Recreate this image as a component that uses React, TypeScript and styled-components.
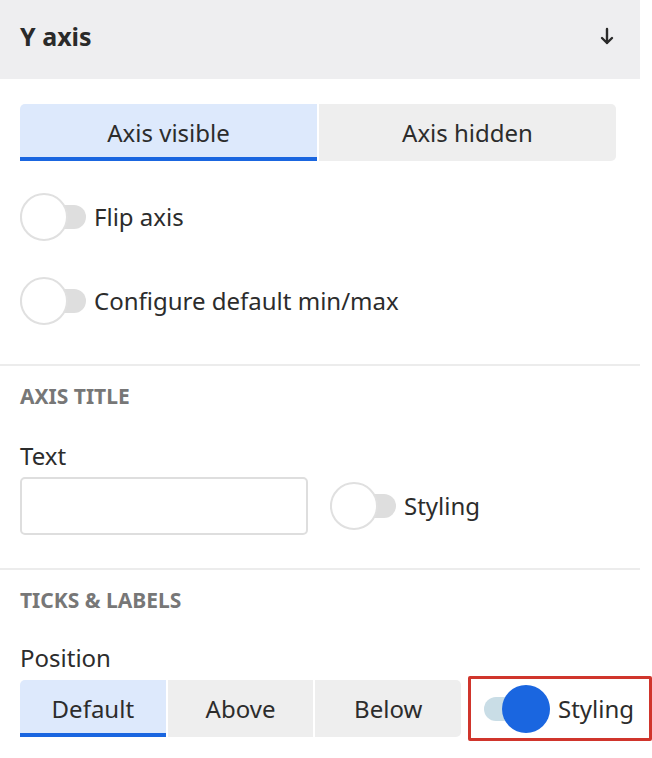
import styled, { createGlobalStyle } from 'styled-components';

const GlobalStyle = createGlobalStyle`
    body {
        margin: 0;
        background: #ffffff;
        font-family: "Noto Sans", "Open Sans", sans-serif;
        color: #2c2c2c;
    }
`;

const Panel = styled.div`
    width: 640px;
`;

const Header = styled.div`
    height: 79px;
    background-color: #eeeef0;
    display: flex;
    align-items: center;
    justify-content: space-between;
    padding: 0 26px 7px 20px;
    box-sizing: border-box;
`;

const Title = styled.h1`
    margin: 0;
    font-size: 25px;
    font-weight: 700;
    color: #2a2a2a;
`;

const Section = styled.div<{ $top: number; $bottom: number }>`
    padding: ${p => p.$top}px 24px ${p => p.$bottom}px 20px;
    border-bottom: 2px solid #ececec;

    &:last-child {
        border-bottom: none;
    }
`;

const Heading = styled.div`
    font-size: 21px;
    font-weight: 700;
    color: #777777;
    text-transform: uppercase;
    line-height: 24px;
`;

const Label = styled.div`
    font-size: 24px;
    line-height: 28px;
`;

const Segmented = styled.div<{ $width: number }>`
    display: flex;
    gap: 2px;
    width: ${p => p.$width}px;
    flex-shrink: 0;
`;

const Segment = styled.div<{ $active?: boolean }>`
    flex: 1;
    height: 57px;
    box-sizing: border-box;
    display: flex;
    align-items: center;
    justify-content: center;
    font-size: 24px;
    background-color: ${p => (p.$active ? '#dde9fc' : '#eeeeee')};
    border-bottom: 4px solid ${p => (p.$active ? '#1a66e0' : 'transparent')};
    padding-top: 4px;

    &:first-child {
        border-top-left-radius: 5px;
    }

    &:last-child {
        border-top-right-radius: 5px;
        border-bottom-right-radius: 5px;
    }
`;

const ToggleRow = styled.div`
    display: flex;
    align-items: center;
    gap: 8px;
    font-size: 24px;
    line-height: 28px;
`;

const ToggleBox = styled.div`
    position: relative;
    width: 66px;
    height: 48px;
    flex-shrink: 0;
`;

const Track = styled.div<{ $on?: boolean }>`
    position: absolute;
    left: 0;
    right: 0;
    top: 12px;
    height: 24px;
    border-radius: 12px;
    background-color: ${p => (p.$on ? '#c9dde6' : '#dedede')};
`;

const Knob = styled.div<{ $on?: boolean }>`
    position: absolute;
    top: 0;
    left: ${p => (p.$on ? '18px' : '0')};
    width: 48px;
    height: 48px;
    box-sizing: border-box;
    border-radius: 50%;
    background-color: ${p => (p.$on ? '#1a66e0' : '#ffffff')};
    border: ${p => (p.$on ? 'none' : '2px solid #e0e0e0')};
`;

const Toggles = styled.div`
    display: flex;
    flex-direction: column;
    gap: 36px;
    margin-top: 32px;
`;

const FieldRow = styled.div`
    display: flex;
    align-items: center;
    gap: 22px;
    margin-top: 7px;
`;

const TextInput = styled.input`
    width: 288px;
    height: 58px;
    box-sizing: border-box;
    border: 2px solid #dedede;
    border-radius: 5px;
    font-size: 20px;
    padding: 0 12px;
    outline: none;
`;

const PositionRow = styled.div`
    display: flex;
    align-items: center;
    gap: 7px;
    margin-top: 4px;
`;

const Highlight = styled.div`
    flex-shrink: 0;
    width: 184px;
    border: 3px solid #d0352c;
    border-radius: 2px;
    height: 65px;
    box-sizing: border-box;
    padding: 0 0 0 13px;
    display: flex;
    align-items: center;
`;

const Toggle = ({ on, label }: { on?: boolean; label: string }) => (
    <ToggleRow>
        <ToggleBox>
            <Track $on={on} />
            <Knob $on={on} />
        </ToggleBox>
        <span>{label}</span>
    </ToggleRow>
);

const App = () => {
    return (
        <Panel>
            <GlobalStyle />
            <Header>
                <Title>Y axis</Title>
                <svg width="14" height="18" viewBox="0 0 14 18" fill="none" stroke="#2a2a2a" strokeWidth="2.4" strokeLinecap="round" strokeLinejoin="round">
                    <path d="M7 2v14M2 11l5 5 5-5" />
                </svg>
            </Header>
            <Section $top={25} $bottom={39}>
                <Segmented $width={596}>
                    <Segment $active>Axis visible</Segment>
                    <Segment>Axis hidden</Segment>
                </Segmented>
                <Toggles>
                    <Toggle label="Flip axis" />
                    <Toggle label="Configure default min/max" />
                </Toggles>
            </Section>
            <Section $top={18} $bottom={33}>
                <Heading>Axis title</Heading>
                <Label style={{ marginTop: 34 }}>Text</Label>
                <FieldRow>
                    <TextInput />
                    <Toggle label="Styling" />
                </FieldRow>
            </Section>
            <Section $top={18} $bottom={16}>
                <Heading>Ticks &amp; labels</Heading>
                <Label style={{ marginTop: 32 }}>Position</Label>
                <PositionRow>
                    <Segmented $width={441}>
                        <Segment $active>Default</Segment>
                        <Segment>Above</Segment>
                        <Segment>Below</Segment>
                    </Segmented>
                    <Highlight>
                        <Toggle on label="Styling" />
                    </Highlight>
                </PositionRow>
            </Section>
        </Panel>
    );
};

export default App;
